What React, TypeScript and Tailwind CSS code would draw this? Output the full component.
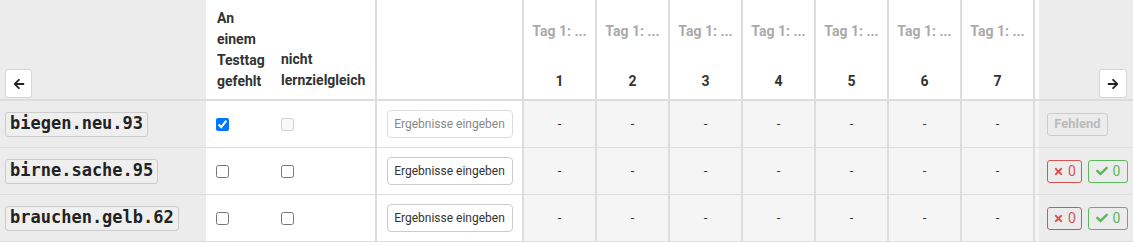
import React from 'react'
import { FaArrowLeft, FaArrowRight, FaTimes, FaCheck } from 'react-icons/fa'

const days = [1, 2, 3, 4, 5, 6, 7]

const students = [
  { name: 'biegen.neu.93', missed: true, first: true },
  { name: 'birne.sache.95', missed: false, first: false },
  { name: 'brauchen.gelb.62', missed: false, first: false },
]

export default function App() {
  return (
    <div className="w-[1133px] h-[242px] overflow-hidden bg-white text-[#333] font-['Roboto',sans-serif]">
      {/* header */}
      <div className="flex h-[101px] border-b-2 border-[#dddddd]">
        <div className="w-[206px] shrink-0 bg-[#ececec] flex items-end pl-[5px] pb-[1px]">
          <button className="w-[27px] h-[29px] bg-white border border-[#d6d6d6] rounded-[3px] flex items-center justify-center text-[#222]">
            <FaArrowLeft size={12} />
          </button>
        </div>
        <div className="w-[66px] shrink-0 pl-[11px] pt-[8px] text-[14px] font-bold leading-[21px]">
          An<br />einem<br />Testtag<br />gefehlt
        </div>
        <div className="w-[105px] shrink-0 pl-[9px] pt-[8px] text-[14px] font-bold leading-[21px] border-r-2 border-[#dddddd] flex flex-col justify-end pb-[8px]">
          nicht<br />lernzielgleich
        </div>
        <div className="w-[147px] shrink-0 border-r-2 border-[#dddddd]" />
        {days.map((d) => (
          <div key={d} className="w-[73px] shrink-0 border-r-2 border-[#dddddd] flex flex-col items-center text-[14px] font-bold">
            <div className="mt-[21px] text-[#aaaaaa] leading-[21px]">Tag 1: ...</div>
            <div className="mt-[29px] leading-[21px]">{d}</div>
          </div>
        ))}
        <div className="w-[4px] shrink-0" />
        <div className="flex-1 bg-[#ececec] flex items-end justify-end pr-[6px] pb-[1px]">
          <button className="w-[28px] h-[29px] bg-white border border-[#d6d6d6] rounded-[3px] flex items-center justify-center text-[#222]">
            <FaArrowRight size={12} />
          </button>
        </div>
      </div>

      {/* rows */}
      {students.map((s) => (
        <div key={s.name} className="flex h-[47px] border-b border-[#dddddd]">
          <div className="w-[206px] shrink-0 bg-[#ececec] flex items-center pl-[5px]">
            <span className="px-[4px] h-[25px] flex items-center border border-[#cccccc] rounded-[3px] bg-[#efefef] text-[17px] font-bold text-[#222] font-['DejaVu_Sans_Mono',monospace]">
              {s.name}
            </span>
          </div>
          <div className="w-[66px] shrink-0 flex items-center pl-[10px]">
            <input type="checkbox" defaultChecked={s.missed} className="w-[13px] h-[13px] m-0" />
          </div>
          <div className="w-[105px] shrink-0 flex items-center pl-[9px] border-r-2 border-[#dddddd]">
            <input type="checkbox" disabled={s.first} className="w-[13px] h-[13px] m-0" />
          </div>
          <div className="w-[147px] shrink-0 flex items-center justify-center border-r-2 border-[#dddddd]">
            <button
              className={
                s.first
                  ? 'w-[126px] h-[28px] border border-[#dddddd] rounded-[4px] bg-white text-[12px] text-[#888]'
                  : 'w-[126px] h-[28px] border border-[#cccccc] rounded-[4px] bg-white text-[12px] text-[#333]'
              }
            >
              Ergebnisse eingeben
            </button>
          </div>
          {days.map((d) => (
            <div key={d} className="w-[73px] shrink-0 bg-[#f5f5f5] border-r-2 border-[#dddddd] flex items-center justify-center text-[13px]">
              -
            </div>
          ))}
          <div className="w-[4px] shrink-0 bg-[#f5f5f5]" />
          <div className="flex-1 bg-[#ececec] flex items-center pl-[8px] gap-[6px]">
            {s.first ? (
              <button className="w-[61px] h-[23px] border border-[#cccccc] rounded-[3px] text-[13px] font-bold text-[#bbbbbb]">
                Fehlend
              </button>
            ) : (
              <>
                <button className="w-[35px] h-[23px] border border-[#d9534f] rounded-[3px] text-[14px] text-[#d9534f] flex items-center justify-center gap-[4px]">
                  <FaTimes size={11} />
                  <span>0</span>
                </button>
                <button className="w-[40px] h-[23px] border border-[#5cb85c] rounded-[3px] text-[14px] text-[#5cb85c] flex items-center justify-center gap-[5px]">
                  <FaCheck size={12} />
                  <span>0</span>
                </button>
              </>
            )}
          </div>
        </div>
      ))}
    </div>
  )
}
